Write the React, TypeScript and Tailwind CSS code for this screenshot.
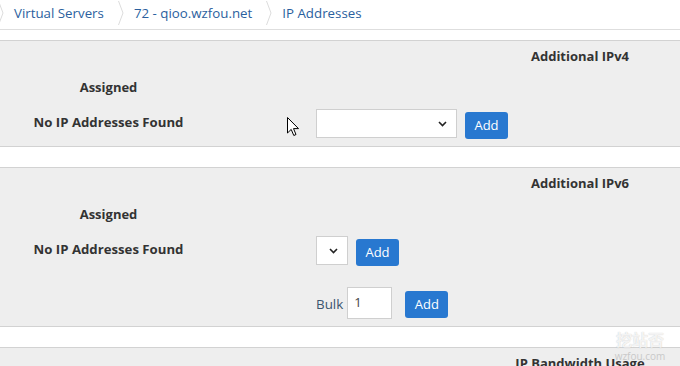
import React from "react";

const font = { fontFamily: '"Open Sans", "Noto Sans", sans-serif' };

function Chevron() {
  return (
    <svg width="6" height="26" viewBox="0 0 6 26" className="shrink-0">
      <path d="M0.5 1 L5 13 L0.5 25" fill="none" stroke="#dcdcdc" strokeWidth="1" />
    </svg>
  );
}

function Crumb({ text, last }: { text: string; last?: boolean }) {
  return (
    <div className="flex items-center">
      <Chevron />
      <span className={`ml-[10px] ${last ? "" : "mr-[14px]"} text-[13.3px] leading-[26px] text-[#2b5f9e]`}>{text}</span>
    </div>
  );
}

function Arrow() {
  return (
    <svg width="9" height="6" viewBox="0 0 9 6" className="shrink-0">
      <path d="M1 1 L4.5 4.5 L8 1" fill="none" stroke="#222" strokeWidth="1.6" />
    </svg>
  );
}

function AddButton({ className = "" }: { className?: string }) {
  return (
    <button
      className={`h-[27px] w-[43px] rounded-[3px] bg-[#2878d0] text-[13px] text-white leading-none ${className}`}
      style={font}
    >
      Add
    </button>
  );
}

function Heading({ text }: { text: string }) {
  return (
    <div className="flex h-[32px] items-center justify-end">
      <div className="w-[200px] text-center text-[13px] font-bold text-[#333]">{text}</div>
    </div>
  );
}

function AssignedRow() {
  return (
    <div className="flex h-[30px] items-center">
      <div className="w-[217px] text-center text-[13px] font-bold text-[#333]">Assigned</div>
    </div>
  );
}

function NoIpRow({ wide }: { wide?: boolean }) {
  return (
    <div className="flex h-[43px] items-start">
      <div className="mt-[9px] w-[217px] text-center text-[13.2px] font-bold leading-[20px] text-[#333]">
        No IP Addresses Found
      </div>
      <div
        className={`ml-[99px] mt-[6px] flex h-[29px] items-center justify-end border border-[#cfcfcf] bg-white pr-[9px] ${
          wide ? "w-[141px]" : "w-[32px]"
        }`}
      >
        <Arrow />
      </div>
      <AddButton className={`ml-[8px] mt-[9px]`} />
    </div>
  );
}

export default function App() {
  return (
    <div className="relative h-[366px] w-[680px] overflow-hidden bg-white" style={font}>
      {/* breadcrumb */}
      <div className="flex h-[30px] items-start border-b border-[#dedede]">
        <div className="-ml-[2px] flex items-start">
          <Crumb text="Virtual Servers" />
          <Crumb text="72 - qioo.wzfou.net" />
          <Crumb text="IP Addresses" last />
        </div>
      </div>

      {/* IPv4 panel */}
      <div className="mt-[10px] border-y border-[#d2d2d2] bg-[#eeeeee]">
        <Heading text="Additional IPv4" />
        <AssignedRow />
        <NoIpRow wide />
      </div>

      {/* IPv6 panel */}
      <div className="mt-[20px] border-y border-[#d2d2d2] bg-[#eeeeee]">
        <Heading text="Additional IPv6" />
        <AssignedRow />
        <NoIpRow />
        <div className="flex h-[53px] items-start">
          <div className="ml-[316px] mt-[21px] text-[13.4px] leading-[20px] text-[#3b5670]">Bulk</div>
          <div className="ml-[4px] mt-[14px] flex h-[32px] w-[45px] items-center border border-[#cfcfcf] bg-white pl-[6px] text-[13px] text-[#444]">
            1
          </div>
          <AddButton className="ml-[13px] mt-[18px]" />
        </div>
      </div>

      {/* bandwidth panel */}
      <div className="mt-[20px] border-t border-[#d2d2d2] bg-[#eeeeee]">
        <Heading text="IP Bandwidth Usage" />
      </div>

      {/* cursor overlay */}
      <svg className="absolute left-[287px] top-[117px]" width="13" height="20" viewBox="0 0 13 20">
        <path
          d="M0.5 0.5 L0.5 16 L4.2 12.4 L6.8 18.5 L9 17.5 L6.5 11.6 L11.5 11.6 Z"
          fill="white"
          stroke="black"
          strokeWidth="1"
          strokeLinejoin="round"
        />
      </svg>

      {/* watermark */}
      <div className="pointer-events-none absolute left-[610px] top-[331px] flex w-[60px] flex-col items-center gap-[4px]">
        <span
          className="text-[16px] font-bold leading-[16px] text-white/80"
          style={{ fontFamily: '"Noto Sans CJK SC", sans-serif', textShadow: "0 0 1px rgba(0,0,0,0.25)" }}
        >
          挖站否
        </span>
        <span className="text-[10px] leading-[10px] text-[#c9c9c9]">wzfou.com</span>
      </div>
    </div>
  );
}
